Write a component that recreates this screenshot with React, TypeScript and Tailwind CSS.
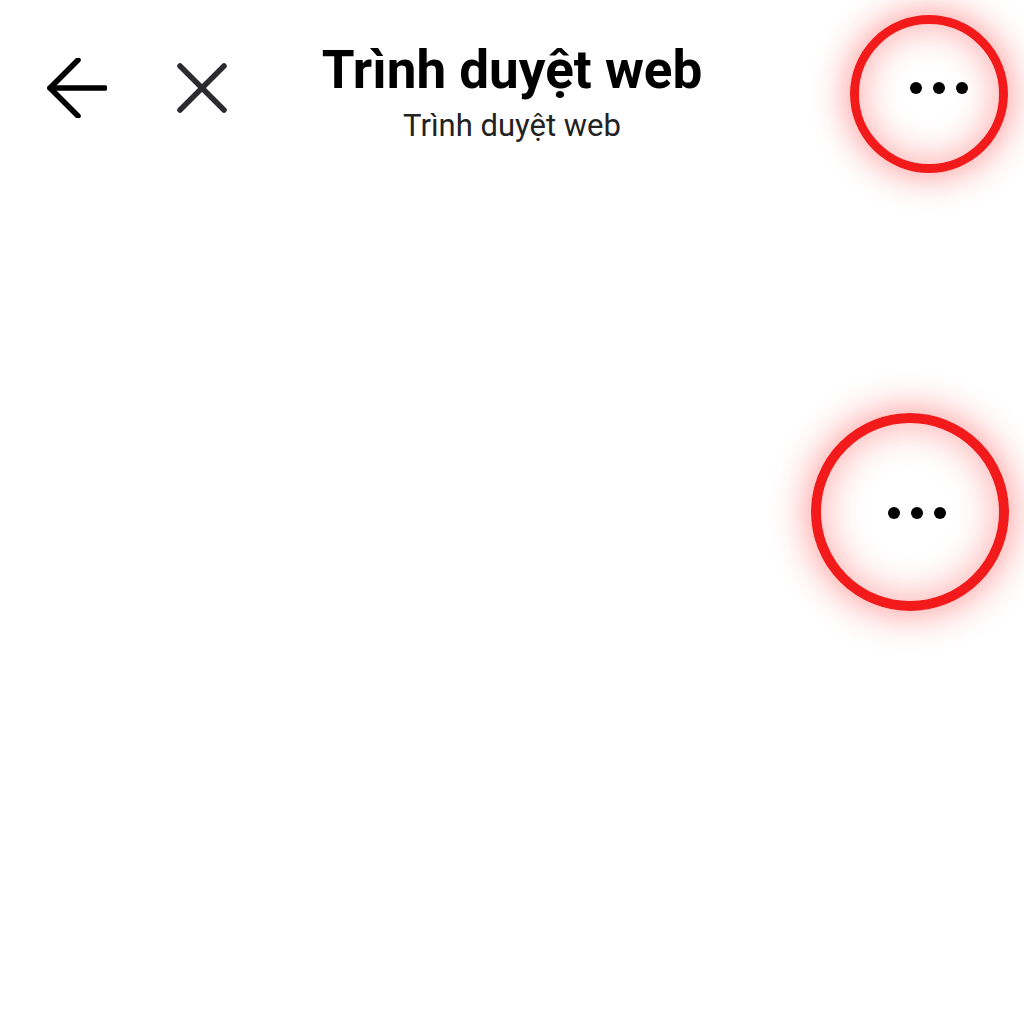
import React from "react";

function BackArrow() {
  return (
    <svg width="60" height="60" viewBox="0 0 60 60" fill="none" stroke="#000" strokeWidth="5.5" strokeLinecap="round" strokeLinejoin="round">
      <path d="M58 30H3" />
      <path d="M31 2L3 30L31 58" />
    </svg>
  );
}

function CloseIcon() {
  return (
    <svg width="50" height="50" viewBox="0 0 50 50" fill="none" stroke="#2b2b30" strokeWidth="5.5" strokeLinecap="round">
      <path d="M3 3L47 47" />
      <path d="M47 3L3 47" />
    </svg>
  );
}

function Dots() {
  return (
    <div className="flex items-center gap-[11px]">
      <span className="block h-[12px] w-[12px] rounded-full bg-black" />
      <span className="block h-[12px] w-[12px] rounded-full bg-black" />
      <span className="block h-[12px] w-[12px] rounded-full bg-black" />
    </div>
  );
}

export default function App() {
  return (
    <div className="relative h-[1024px] w-[1024px] overflow-hidden bg-white" style={{ fontFamily: "Roboto, 'Noto Sans', sans-serif" }}>
      <header className="grid h-[180px] grid-cols-[1fr_auto_1fr] items-start">
        <div className="flex items-center gap-[70px] pl-[47px] pt-[58px]">
          <BackArrow />
          <CloseIcon />
        </div>
        <div className="flex flex-col items-center pt-[44px]">
          <h1 className="text-[53px] font-bold leading-none text-black">Trình duyệt web</h1>
          <p className="mt-[13px] text-[31px] leading-none text-[#222]">Trình duyệt web</p>
        </div>
        <div className="flex justify-end pr-[56px] pt-[82px]">
          <Dots />
        </div>
      </header>

      {/* highlight rings */}
      <div className="absolute left-[850px] top-[15px] h-[158px] w-[158px] rounded-full border-[9px] border-[#f21a1a] shadow-[0_0_34px_4px_rgba(255,40,40,0.45),inset_0_0_34px_4px_rgba(255,40,40,0.35)]" />

      <div className="absolute left-[811px] top-[413px] flex h-[198px] w-[198px] items-center justify-center rounded-full border-[10px] border-[#f21a1a] shadow-[0_0_36px_4px_rgba(255,40,40,0.45),inset_0_0_36px_4px_rgba(255,40,40,0.35)]">
        <div className="ml-[13px] mt-[2px]">
          <Dots />
        </div>
      </div>
    </div>
  );
}
